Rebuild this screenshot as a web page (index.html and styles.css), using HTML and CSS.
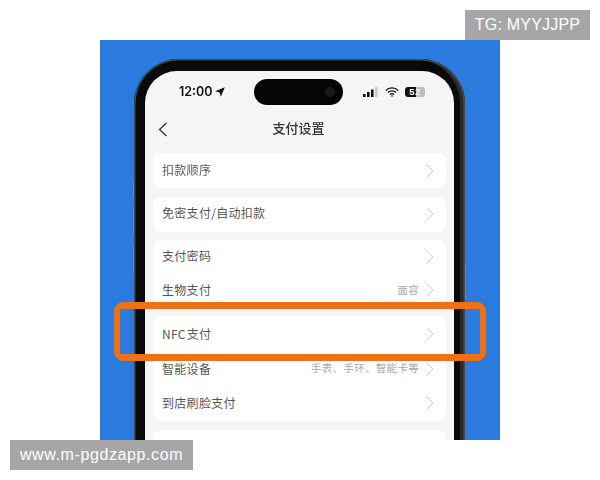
FILE: index.html
```html
<!DOCTYPE html>
<html lang="zh-CN">
<head>
<meta charset="utf-8">
<title>支付设置</title>
<link rel="stylesheet" href="styles.css">
</head>
<body>
<div class="page">
  <div class="tag tag-top">TG: MYYJJPP</div>
  <div class="panel">
    <div class="phone">
      <i class="side-btn btn-a"></i><i class="side-btn btn-b"></i><i class="side-btn btn-c"></i><i class="side-btn btn-d"></i>
      <div class="screen">
        <div class="status">
          <div class="time">12:00<svg class="arrow" viewBox="0 0 10 10"><path d="M9.8.2 5.8 9.8 4.6 5.4.2 4.2z"/></svg></div>
          <div class="island"><i class="camera"></i></div>
          <div class="sys">
            <svg class="signal" viewBox="0 0 15 10"><rect x="0" y="7" width="2.6" height="3" fill="#111"/><rect x="4" y="5" width="2.6" height="5" fill="#111"/><rect x="8" y="2.5" width="2.6" height="7.5" fill="#111"/><rect x="12" y="0" width="2.6" height="10" fill="#c8c8c8"/></svg>
            <svg class="wifi" viewBox="0 0 14 10"><path d="M.8 3.4a9 9 0 0 1 12.4 0M2.9 5.5a6 6 0 0 1 8.2 0M5 7.5a3 3 0 0 1 4 0" fill="none" stroke="#111" stroke-width="1.4"/><path d="M7 10 5.8 8.7a1.8 1.8 0 0 1 2.4 0z" fill="#111"/></svg>
            <div class="battery">52</div>
          </div>
        </div>
        <div class="nav">
          <svg class="back" viewBox="0 0 10 15"><path d="M8.5 1 1.5 7.5 8.5 14" fill="none" stroke="#333" stroke-width="1.3"/></svg>
          <div class="title">支付设置</div>
        </div>
        <div class="list">
          <div class="card">
            <div class="row"><span>扣款顺序</span><svg class="chev" viewBox="0 0 8 14"><path d="M1 1 7 7 1 13"/></svg></div>
          </div>
          <div class="card">
            <div class="row"><span>免密支付/自动扣款</span><svg class="chev" viewBox="0 0 8 14"><path d="M1 1 7 7 1 13"/></svg></div>
          </div>
          <div class="card">
            <div class="row row-short"><span>支付密码</span><svg class="chev" viewBox="0 0 8 14"><path d="M1 1 7 7 1 13"/></svg></div>
            <div class="row row-short"><span>生物支付</span><em class="hint">面容</em><svg class="chev" viewBox="0 0 8 14"><path d="M1 1 7 7 1 13"/></svg></div>
          </div>
          <div class="card card-main">
            <div class="row"><span>NFC 支付</span><svg class="chev" viewBox="0 0 8 14"><path d="M1 1 7 7 1 13"/></svg></div>
            <div class="row"><span>智能设备</span><em class="hint">手表、手环、智能卡等</em><svg class="chev" viewBox="0 0 8 14"><path d="M1 1 7 7 1 13"/></svg></div>
            <div class="row"><span>到店刷脸支付</span><svg class="chev" viewBox="0 0 8 14"><path d="M1 1 7 7 1 13"/></svg></div>
          </div>
          <div class="card card-last"></div>
        </div>
      </div>
    </div>
    <div class="highlight"></div>
  </div>
  <div class="tag tag-bottom">www.m-pgdzapp.com</div>
</div>
</body>
</html>
```
FILE: styles.css
```css
* { box-sizing: border-box; }
html, body { margin: 0; background: #fff; }
.page {
  width: 600px;
  height: 480px;
  overflow: hidden;
  padding-top: 40px;
  position: relative;
  font-family: "Noto Sans CJK SC", "Noto Sans", sans-serif;
}
.tag {
  position: absolute;
  z-index: 3;
  height: 30px;
  background: #a6a6a6;
  color: #fff;
  font: 16px/30px "Liberation Sans", Arial, sans-serif;
  text-align: center;
}
.tag-top { top: 10px; left: 465px; width: 125px; letter-spacing: .2px; }
.tag-bottom { top: 440px; left: 10px; width: 183px; letter-spacing: .6px; }

.panel {
  position: relative;
  width: 400px;
  height: 400px;
  margin-left: 100px;
  padding: 19px 0 0 34px;
  background: #2b7ade;
  overflow: hidden;
}
.phone {
  position: relative;
  width: 331px;
  height: 500px;
  padding: 12px 11px 0;
  background: #0a0a0a;
  border-radius: 45px 45px 0 0;
  box-shadow: inset 0 0 0 1.5px #45484d, inset -5px 0 0 #2a2b2d;
}
.side-btn {
  position: absolute;
  left: -1px;
  width: 1px;
  background: #6f83a3;
}
.btn-a { top: 122px; height: 16px; }
.btn-b { top: 148px; height: 28px; }
.btn-c { top: 186px; height: 28px; }
.btn-d { top: 206px; height: 34px; left: 331px; }
.screen {
  height: 100%;
  background: #f5f5f5;
  border-radius: 32px 32px 0 0;
  overflow: hidden;
  filter: blur(.3px);
}
.status {
  display: flex;
  align-items: center;
  height: 26px;
  margin-top: 8px;
  padding-left: 34px;
}
.time {
  display: flex;
  align-items: center;
  width: 75px;
  font: 600 12.5px/1 Inter, sans-serif;
  color: #111;
}
.arrow { width: 10px; height: 10px; margin-left: 2px; fill: #111; }
.island {
  position: relative;
  width: 89px;
  height: 26px;
  border-radius: 13px;
  background: #050505;
}
.camera {
  position: absolute;
  right: 8px;
  top: 8px;
  width: 10px;
  height: 10px;
  border-radius: 50%;
  background: #15171c;
}
.sys {
  display: flex;
  align-items: center;
  margin-left: 20px;
}
.signal { width: 15px; height: 10px; }
.wifi { width: 14px; height: 10px; margin-left: 7px; }
.battery {
  width: 20px;
  height: 10px;
  margin-left: 6px;
  border-radius: 3px;
  background: linear-gradient(90deg, #111 0 54%, #bdbdbd 54%);
  color: #fff;
  font: 700 9.5px/10px "Liberation Sans", sans-serif;
  text-align: center;
  letter-spacing: .5px;
}
.nav {
  position: relative;
  height: 32px;
  margin-top: 8px;
  padding: 0 2px 3px 0;
  display: flex;
  align-items: center;
  justify-content: center;
}
.back {
  position: absolute;
  left: 13px;
  top: 9px;
  width: 10px;
  height: 15px;
}
.title {
  font-size: 13px;
  font-weight: 500;
  color: #333;
}
.list {
  display: flex;
  flex-direction: column;
  gap: 8.5px;
  margin-top: 8px;
  padding: 0 8px;
}
.card {
  background: #fff;
  border-radius: 8px;
}
.card-last { height: 60px; margin-top: 1px; }
.row {
  display: flex;
  align-items: center;
  height: 35px;
  padding: 0 12px 0 9px;
  font-size: 12px;
  letter-spacing: .3px;
  color: #555;
}
.row-short { height: 33.5px; }
.row span {
  flex: 1;
  white-space: nowrap;
  word-spacing: -2px;
  padding-bottom: 3px;
}
.row-short + .row-short span { padding-bottom: 1px; }
.card-main .row { height: 34.5px; }
.card-main .row:first-child { height: 36px; }
.card-main .row span { padding-bottom: 1px; }
.hint {
  font-style: normal;
  font-size: 10.5px;
  color: #aaa;
  margin-right: 7px;
  padding-bottom: 2px;
}
.chev {
  width: 8px;
  height: 14px;
  fill: none;
  stroke: #cfcfcf;
  stroke-width: 1;
}
.highlight {
  position: absolute;
  left: 14px;
  top: 262px;
  width: 372px;
  height: 59px;
  border-style: solid;
  border-color: #ef7115;
  border-width: 7px 6.5px;
  border-radius: 9px;
}
```
